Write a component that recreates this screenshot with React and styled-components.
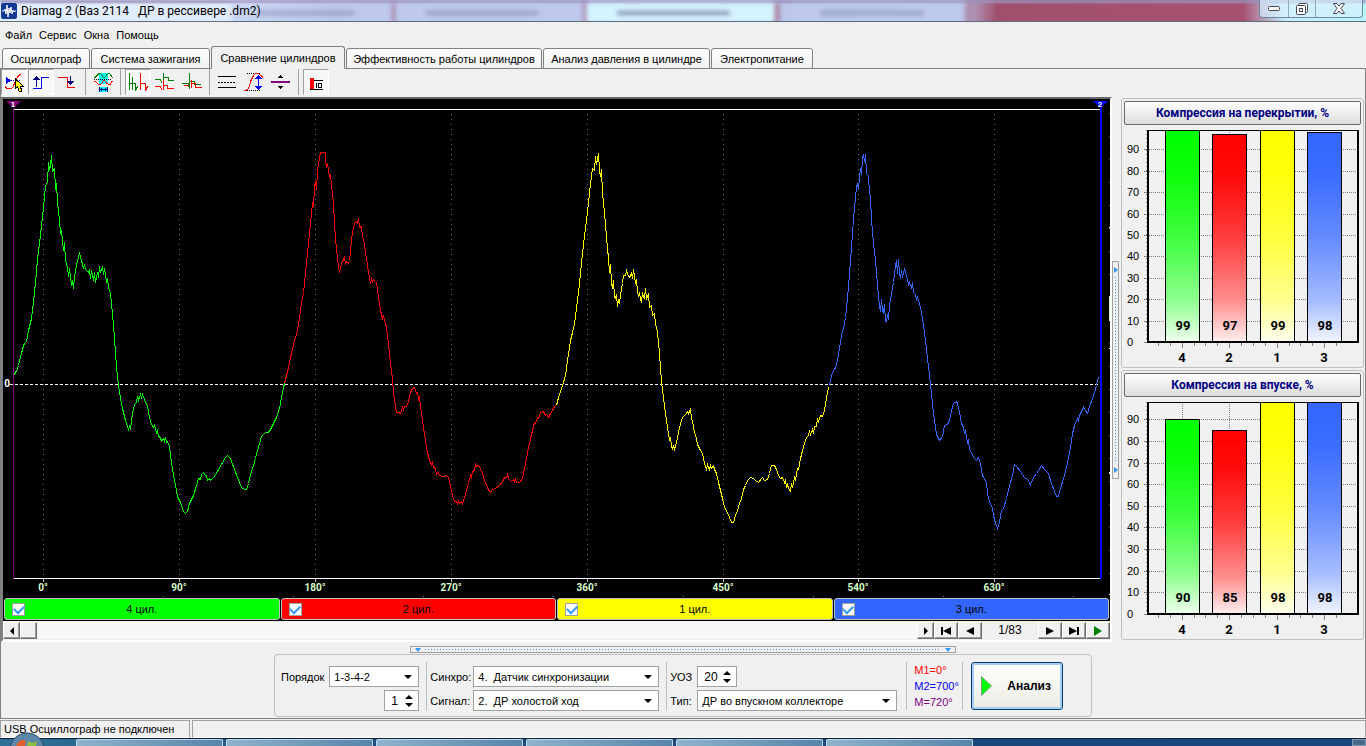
import React, { useState } from 'react';
import styled, { createGlobalStyle } from 'styled-components';

const GREEN = '#00ff00';
const RED = '#ff0000';
const YELLOW = '#ffff00';
const BLUE = '#3366ff';

const tabs = [
    { title: 'Осциллограф', width: 88 },
    { title: 'Система зажигания', width: 119 },
    { title: 'Сравнение цилиндров', width: 134 },
    { title: 'Эффективность работы цилиндров', width: 196 },
    { title: 'Анализ давления в цилиндре', width: 167 },
    { title: 'Электропитание', width: 102 },
];

const cylinders = [
    { name: '4 цил.', color: GREEN },
    { name: '2 цил.', color: RED },
    { name: '1 цил.', color: YELLOW },
    { name: '3 цил.', color: BLUE },
];

// Осциллограммы по цилиндрам
const waves = [
    {
        color: GREEN,
        points: '14,375 15,371 16,371 18,365 21,353 23,345 24,343 26,341 28,330 31,318 33,302 35,282 37,259 39,243 41,225 43,207 45,185 47,182 48,162 49,169 50,165 51,155 52,171 54,168 55,189 56,183 57,202 59,220 60,233 61,230 63,250 64,242 65,260 67,267 68,276 69,268 71,285 72,280 73,288 74,276 76,265 77,260 79,253 81,260 83,268 84,264 85,269 88,272 89,270 90,278 91,270 93,280 94,272 95,282 97,272 98,277 99,266 100,272 102,266 103,274 104,268 106,282 107,278 108,287 110,293 112,313 114,338 116,367 118,385 120,398 122,408 125,420 128,429 129,426 130,428 132,413 134,404 136,402 137,396 138,400 140,394 141,397 142,394 144,399 147,406 149,417 151,424 153,427 154,425 156,432 157,430 158,436 160,437 161,441 163,438 164,441 165,437 166,442 167,441 169,446 171,462 173,475 175,485 177,496 180,502 183,511 185,513 187,511 189,503 193,495 196,485 198,478 200,479 201,474 203,472 205,475 206,475 207,480 209,478 210,480 213,477 217,471 221,464 225,457 227,455 230,458 234,469 239,482 241,487 244,489 246,489 248,483 251,471 253,465 255,458 257,450 259,443 261,436 263,434 265,432 267,432 269,431 272,425 276,417 279,408 281,397 283,387 284,383',
    },
    {
        color: RED,
        points: '284,383 288,367 292,348 297,330 299,317 301,302 303,292 305,273 307,253 309,233 311,213 312,202 313,206 314,187 315,181 316,189 317,170 319,157 320,152 325,152 325,160 326,167 327,163 329,177 330,174 331,185 333,203 334,223 335,238 337,258 338,267 339,272 341,263 343,259 344,257 345,263 346,261 348,263 349,260 350,252 351,238 353,227 355,221 356,222 357,223 358,218 359,227 361,226 362,237 363,238 365,252 367,265 369,277 370,283 371,278 372,281 373,279 376,282 378,297 380,310 382,318 383,316 385,323 386,327 388,343 390,363 392,378 393,393 395,406 396,412 398,412 400,413 402,407 403,409 404,406 406,406 408,401 410,392 412,388 414,387 416,393 417,392 418,399 419,397 421,413 423,427 425,440 427,452 429,460 431,464 432,462 433,467 435,468 436,474 438,472 439,475 442,476 444,476 446,475 448,477 450,486 452,495 454,501 456,501 457,503 458,501 459,503 461,501 462,503 464,497 466,490 468,483 470,475 471,477 472,471 474,470 475,464 476,466 478,465 480,468 482,473 484,480 487,487 489,491 490,492 492,489 495,488 499,485 502,481 504,477 506,477 507,474 508,478 511,481 513,479 514,481 515,479 516,482 519,482 522,478 524,468 526,458 528,447 530,438 532,430 534,422 535,423 537,417 538,418 540,412 543,411 545,415 546,414 548,417 550,413 552,410 554,406 556,404',
    },
    {
        color: YELLOW,
        points: '556,405 558,397 562,385 565,375 567,360 569,347 570,340 572,332 574,323 576,308 578,292 580,273 582,253 584,235 586,220 588,202 590,183 592,168 594,170 595,156 596,164 597,159 598,153 599,170 600,176 601,169 602,193 604,212 606,237 608,258 609,272 610,264 611,282 612,288 613,280 614,297 615,298 616,294 617,306 618,300 619,302 620,295 622,283 623,275 625,275 626,270 628,276 629,277 631,273 632,278 633,269 635,283 636,279 637,292 638,295 639,292 640,299 641,302 642,292 643,297 644,298 645,288 646,299 648,293 649,307 651,305 652,315 654,313 655,323 657,332 659,353 660,367 661,382 663,397 665,413 667,427 669,440 670,437 671,445 672,449 673,445 674,449 676,442 678,432 680,423 682,417 685,414 687,411 688,413 690,409 691,417 693,425 694,433 695,434 697,444 700,450 702,453 704,463 706,469 707,464 708,467 709,469 710,465 711,468 713,465 714,469 716,473 718,482 720,490 722,498 724,507 727,512 729,517 731,522 733,522 735,515 737,510 739,503 741,498 743,489 745,485 747,480 750,477 753,478 755,480 758,482 761,478 762,477 764,480 767,479 769,473 771,465 774,465 776,469 778,475 780,478 782,477 784,482 785,479 786,487 787,484 788,488 790,491 791,483 792,487 794,477 795,479 797,468 798,469 800,458 802,450 804,443 806,437 808,435 809,431 810,434 812,429 813,433 814,426 816,426 817,418 818,421 820,415 822,416 824,410 826,397 828,387',
    },
    {
        color: BLUE,
        points: '829,385 831,375 834,368 835,368 837,360 839,347 842,330 843,329 845,317 847,298 849,273 851,247 853,218 855,197 856,187 857,183 858,189 859,177 860,168 861,174 862,157 863,154 864,161 865,154 866,173 868,175 869,193 870,196 871,220 873,243 875,260 877,285 879,305 880,311 881,299 882,310 883,312 884,304 885,321 886,321 887,314 888,319 889,305 890,299 892,288 893,282 895,265 896,260 897,273 898,259 899,273 900,278 901,270 902,277 904,268 906,275 908,284 909,282 911,287 912,282 913,292 915,294 916,299 917,297 919,303 921,312 923,325 925,340 927,358 929,375 931,393 933,413 935,427 936,434 939,440 942,436 944,425 947,424 949,420 951,410 953,403 956,401 957,403 959,412 961,423 963,427 964,433 965,429 966,437 967,442 968,440 969,448 972,455 974,458 976,460 978,457 980,463 982,475 986,482 987,493 989,502 992,507 993,515 995,523 997,528 999,522 1001,510 1003,508 1006,498 1009,485 1012,475 1014,464 1016,466 1020,471 1024,477 1027,479 1030,484 1033,477 1036,473 1038,470 1041,465 1044,469 1048,473 1051,483 1054,491 1056,496 1058,496 1060,488 1063,478 1066,467 1068,457 1070,447 1072,433 1074,425 1077,418 1078,420 1079,415 1081,411 1083,407 1084,409 1087,413 1089,406 1092,398 1094,392 1096,385 1098,377',
    },
];

const degrees = [
    [43, '0°'], [179, '90°'], [315, '180°'], [451, '270°'],
    [587, '360°'], [723, '450°'], [858, '540°'], [994, '630°'],
];

const charts = [
    { title: 'Компрессия на перекрытии, %', max: 99, values: [99, 97, 99, 98] },
    { title: 'Компрессия на впуске, %', max: 98, values: [90, 85, 98, 98] },
];

const bars = [
    { x: 43, label: '4', color: GREEN, tone: 'green' },
    { x: 90, label: '2', color: RED, tone: 'red' },
    { x: 138, label: '1', color: YELLOW, tone: 'yellow' },
    { x: 185, label: '3', color: BLUE, tone: 'blue' },
];

// Кнопки панели инструментов, разбитые на группы
const toolGroups = [
    [
        {
            name: 'Маркер', pressed: true,
            icon: (
                <>
                    <path d="M2 5v7l5-3.5z" fill="#0000ff" />
                    <path d="M7 8.500h10" stroke="#0000ff" strokeDasharray="1 1" />
                    <path d="M1 14.500c2 3 6 3.500 8 .5 2-4 3-11 8-13" stroke={RED} />
                    <path d="M11 6.500v10l2.500-1.500 2 5 2.500-1-2-5h3z" fill={YELLOW} stroke="#000" />
                </>
            ),
        },
        {
            name: 'Передний фронт', pressed: true,
            icon: (
                <>
                    <path d="M2 16.500h8v-11h8" stroke="#0000ff" />
                    <path d="M5.500 15V7" stroke="#000080" />
                    <path d="M5.500 4l3.500 4h-7z" fill="#000080" />
                </>
            ),
        },
        {
            name: 'Задний фронт',
            icon: (
                <>
                    <path d="M0 5.500h9v10h8" stroke={RED} />
                    <path d="M12.500 4v6" stroke="#000080" />
                    <path d="M12.500 13l3.500-4h-7z" fill="#000080" />
                </>
            ),
        },
    ],
    [
        {
            name: 'Окно',
            icon: (
                <>
                    <path d="M6 1h9v11h-9zM6 15h9v5h-9z" fill="#00ffff" />
                    <path d="M1 5.500c3 0 3-4 6-4s2 4 4 4 2-4 5-4 1 4 4 4" stroke="#008000" />
                    <path d="M1 9.500c3 0 3 3 6 3s2-4 4-4 2 4 5 4 1-3 4-3" stroke={RED} />
                    <path d="M1 7.500h18" stroke="#000" strokeDasharray="1 1" />
                    <path d="M6.500 15v5M14.500 15v5M7 17.500h7M8.500 16v3M12.500 16v3" stroke="#000080" />
                </>
            ),
        },
    ],
    [
        {
            name: 'Наложение', pressed: true,
            icon: (
                <>
                    <path d="M1.500 18V1M1.500 11.500h6v7l2-4M4.500 5v13" stroke="#008000" />
                    <path d="M12.500 1v17M12.500 11.500h5v7l2-4" stroke={RED} />
                </>
            ),
        },
        {
            name: 'Раздельно',
            icon: (
                <>
                    <path d="M0 7.500h5l2 3M8.500 1v9M9 5.500h4v3h6" stroke="#008000" />
                    <path d="M0 14.500h5l2 3M8.500 8v10M9 13.500h3v3h7" stroke={RED} />
                </>
            ),
        },
        {
            name: 'Совмещение',
            icon: (
                <>
                    <path d="M0 11.500h6v3M7.500 1v16M8 9.500h4v3h7" stroke="#008000" />
                    <path d="M2 13.500h5M9.500 8v8M10 11.500h3v4h7" stroke={RED} />
                </>
            ),
        },
    ],
    [
        {
            name: 'Линии',
            icon: (
                <>
                    <path d="M1 4.500h18M1 15.500h18" stroke="#000" />
                    <path d="M1 10.500h18" stroke="#000" strokeDasharray="2 1" />
                </>
            ),
        },
        {
            name: 'Масштаб',
            icon: (
                <>
                    <path d="M3 1.500h14M3 18.500h14" stroke="#000" strokeDasharray="1 1" />
                    <path d="M0 18.500c6 0 5-5 7-10s5-10 10-5l2 2" stroke={RED} />
                    <path d="M14.500 5v11" stroke="#0000ff" />
                    <path d="M14.500 2.500l4 4.500h-8zM14.500 18.500l4-4.500h-8z" fill="#0000ff" />
                </>
            ),
        },
        {
            name: 'Сдвиг',
            icon: (
                <>
                    <path d="M0 9h19v2h-19z" fill="#800080" />
                    <path d="M9.500 2.500l3 3.500h-6zM9.500 17.500l3-3.500h-6z" fill="#000" />
                </>
            ),
        },
    ],
    [
        {
            name: 'Гистограмма', pressed: true,
            icon: (
                <>
                    <path d="M4 6h4v11h-4z" fill={RED} />
                    <path d="M4 17.500h13M8 8.500h9M10.500 11v5M12.500 11.500h3v4h-3z" stroke="#000" />
                </>
            ),
        },
    ],
];

function WaveChart() {
    return (
        <WaveSvg viewBox="3 99 1107 499" role="img" aria-label="Осциллограмма давления">
            <g shapeRendering="crispEdges">
                {degrees.map(([x]) => (
                    <g key={x}>
                        <path d={`M${x + 0.5} 114V578`} stroke="#606060" strokeDasharray="1 4" />
                        <path d={`M${x + 0.5} 579v3`} stroke="#c0c0c0" />
                    </g>
                ))}
                <path d="M14 109.500H1100M14 578.500H1100" stroke="#fff" />
                <path d="M10 384.500H1100" stroke="#fff" strokeDasharray="3 2" />
                <path d="M13.500 106V579" stroke="#800080" />
                <path d="M1109.500 113V590" stroke="#505050" strokeDasharray="1 22" />
                <path d="M1109.500 296v25" stroke="#d0f0d0" />
                <path d="M1109.500 227v1M1109.500 348v1M1109.500 472v2M1109.500 594v1" stroke="#fff" />
                <path d="M163 596.500H1090" stroke="#808080" strokeDasharray="1 129" />
                <g transform="translate(0.500 0.500)">
                    {waves.map((wave) => (
                        <polyline key={wave.color} points={wave.points} fill="none" stroke={wave.color} />
                    ))}
                </g>
                <rect x="1100" y="106" width="2" height="473" fill="#0000ff" />
            </g>
            <path d="M6 101h15l-7.500 7z" fill="#800080" />
            <path d="M1093 101h15l-7.500 7z" fill="#0000ff" />
            <MarkerText x="13" y="107">1</MarkerText>
            <MarkerText x="1100" y="107">2</MarkerText>
            <AxisText x="7" y="387">0</AxisText>
            {degrees.map(([x, text]) => (
                <AxisText key={x} x={x} y="591" $tint>{text}</AxisText>
            ))}
        </WaveSvg>
    );
}

function CompressionChart({ title, max, values }) {
    const scale = 212 / max;
    const level = (value) => Math.round(216 - value * scale);

    return (
        <ChartGroup>
            <ChartTitle type="button">{title}</ChartTitle>
            <BarSvg viewBox="0 -1 239 242" role="img" aria-label={title}>
                <defs>
                    {bars.map((bar) => (
                        <linearGradient key={bar.tone} id={`fill-${bar.tone}`} x1="0" y1="0" x2="0" y2="1">
                            <stop offset="0" stopColor={bar.color} />
                            <stop offset="0.2" stopColor={bar.color} stopOpacity="0.96" />
                            <stop offset="0.5" stopColor={bar.color} stopOpacity="0.76" />
                            <stop offset="0.8" stopColor={bar.color} stopOpacity="0.44" />
                            <stop offset="1" stopColor={bar.color} stopOpacity="0.06" />
                        </linearGradient>
                    ))}
                </defs>
                <g shapeRendering="crispEdges">
                    {[0, 10, 20, 30, 40, 50, 60, 70, 80, 90].map((v) => (
                        <g key={v}>
                            <path d={`M26 ${level(v) + 0.5}H234`} stroke="#808080" strokeDasharray="1 1" />
                            <path d={`M21 ${level(v) + 0.5}h4`} stroke="#808080" />
                        </g>
                    ))}
                    <path d="M23.500 4V216" stroke="#808080" strokeDasharray="1 3" />
                    {bars.map((bar, i) => (
                        <g key={bar.label}>
                            <path d={`M${bar.x + 16.5} 4V216`} stroke="#808080" strokeDasharray="1 1" />
                            <path d={`M${bar.x + 16.5} 217v5M${bar.x + 4.5} 217v3M${bar.x + 28.5} 217v3M${bar.x - 7.5} 217v3`} stroke="#808080" />
                            <rect x={bar.x - 1} y={level(values[i])} width="35" height={216 - level(values[i])} fill="#fff" />
                            <rect x={bar.x - 0.5} y={level(values[i]) + 0.5} width="34" height={216 - level(values[i])} fill={`url(#fill-${bar.tone})`} stroke="#000" />
                        </g>
                    ))}
                    <path d="M24 4.500H236" stroke="#000" />
                    <path d="M25 4V216H235V4" stroke="#000" strokeWidth="2" fill="none" />
                </g>
                {[0, 10, 20, 30, 40, 50, 60, 70, 80, 90].map((v) => (
                    <ScaleText key={v} x="4" y={level(v) + 4}>{v}</ScaleText>
                ))}
                {bars.map((bar, i) => (
                    <g key={bar.label}>
                        <BarText x={bar.x + 17} y="204">{values[i]}</BarText>
                        <BarText x={bar.x + 16} y="236">{bar.label}</BarText>
                    </g>
                ))}
            </BarSvg>
        </ChartGroup>
    );
}

function ComboBox({ id, width, value }) {
    return (
        <Combo $width={width}>
            <ComboSelect id={id} defaultValue={value}>
                <option value={value}>{value}</option>
            </ComboSelect>
            <ComboArrow viewBox="0 0 8 4" aria-hidden="true"><path d="M0 0h8l-4 4z" /></ComboArrow>
        </Combo>
    );
}

function SpinBox({ id, label, width, value }) {
    const [number, setNumber] = useState(value);

    return (
        <Spin $width={width}>
            <SpinInput
                type="number"
                id={id}
                aria-label={label}
                value={number}
                onChange={(event) => setNumber(Number(event.target.value))}
            />
            <SpinButtons>
                <SpinButton type="button" aria-label="Больше" onClick={() => setNumber(number + 1)}>
                    <svg width="8" height="4" viewBox="0 0 8 4"><path d="M0 4h8l-4-4z" /></svg>
                </SpinButton>
                <SpinButton type="button" aria-label="Меньше" onClick={() => setNumber(number - 1)}>
                    <svg width="8" height="4" viewBox="0 0 8 4"><path d="M0 0h8l-4 4z" /></svg>
                </SpinButton>
            </SpinButtons>
        </Spin>
    );
}

function App() {
    const [checked, setChecked] = useState([true, true, true, true]);

    const toggle = (index) => {
        setChecked(checked.map((value, i) => (i === index ? !value : value)));
    };

    return (
        <Window>
            <GlobalStyle />
            <TitleBar>
                <Backdrop aria-hidden="true">
                    <GlassTab $left={17} $width={12} />
                    <GlassTab $left={29} $width={14} />
                    <GlassTab $left={43} $width={14} $active />
                    <GlassTab $left={58} $width={13} />
                </Backdrop>
                <AppIcon viewBox="0 0 16 16" aria-hidden="true">
                    <rect width="16" height="16" rx="2" fill="#123a94" />
                    <path d="M1 8h2l1-2 1 5 1-9 1 12 1-9 1 5 1-6 1 7 1-4 1 2 1-1h1" fill="none" stroke="#fff" />
                </AppIcon>
                <Caption>Diamag 2 (Ваз 2114{'   '}ДР в рессивере .dm2)</Caption>
                <CaptionButtons>
                    <CaptionButton type="button" aria-label="Свернуть" $width={28}>
                        <svg width="12" height="6" viewBox="0 0 12 6"><rect x="0.500" y="0.500" width="11" height="4" rx="1" fill="#fff" stroke="#445" /></svg>
                    </CaptionButton>
                    <CaptionButton type="button" aria-label="Развернуть" $width={27}>
                        <svg width="12" height="12" viewBox="0 0 12 12" fill="#fff" stroke="#445">
                            <rect x="2.500" y="0.500" width="9" height="9" rx="1" />
                            <rect x="0.500" y="2.500" width="9" height="9" rx="1" />
                            <rect x="3.500" y="5.500" width="3" height="3" />
                        </svg>
                    </CaptionButton>
                    <CaptionButton type="button" aria-label="Закрыть" $width={47}>
                        <svg width="12" height="11" viewBox="0 0 12 11"><path d="M.5.500h3.500l2 2.500 2-2.500h3.500l-3.500 5 3.500 5h-3.500l-2-2.500-2 2.500h-3.500l3.500-5z" fill="#fff" stroke="#445" /></svg>
                    </CaptionButton>
                </CaptionButtons>
            </TitleBar>

            <MenuBar>
                {['Файл', 'Сервис', 'Окна', 'Помощь'].map((item) => (
                    <MenuItem key={item} type="button">{item}</MenuItem>
                ))}
            </MenuBar>

            <TabRow role="tablist">
                {tabs.map((tab, i) => (
                    <Tab key={tab.title} type="button" role="tab" aria-selected={i === 2} $active={i === 2} $width={tab.width}>
                        {tab.title}
                    </Tab>
                ))}
            </TabRow>

            <Page>
                <ToolBar>
                    {toolGroups.map((group, i) => (
                        <ToolGroup key={i}>
                            {group.map((tool) => (
                                <ToolButton key={tool.name} type="button" aria-label={tool.name} $pressed={tool.pressed}>
                                    <ToolIcon viewBox="0 0 20 20">{tool.icon}</ToolIcon>
                                </ToolButton>
                            ))}
                        </ToolGroup>
                    ))}
                </ToolBar>

                <Workspace>
                    <Scope>
                        <WaveArea><WaveChart /></WaveArea>
                        <CylinderRow>
                            {cylinders.map((cylinder, i) => (
                                <Cylinder key={cylinder.name} $color={cylinder.color}>
                                    <CheckBox type="checkbox" checked={checked[i]} onChange={() => toggle(i)} />
                                    <CylinderName>{cylinder.name}</CylinderName>
                                </Cylinder>
                            ))}
                        </CylinderRow>
                        <ScrollRow>
                            <BevelButton type="button" aria-label="Влево" $width={17}><Glyph viewBox="0 0 16 10"><path d="M10 1v8l-4-4z" /></Glyph></BevelButton>
                            <BevelButton type="button" aria-label="Ползунок" $width={17} />
                            <ScrollTrack />
                            <BevelButton type="button" aria-label="Вправо" $width={17}><Glyph viewBox="0 0 16 10"><path d="M6 1v8l4-4z" /></Glyph></BevelButton>
                            <BevelButton type="button" aria-label="В начало" $width={24}><Glyph viewBox="0 0 16 10"><path d="M3 1h2v8h-2zM13 1v8l-8-4z" /></Glyph></BevelButton>
                            <BevelButton type="button" aria-label="Назад" $width={24}><Glyph viewBox="0 0 16 10"><path d="M12 1v8l-8-4z" /></Glyph></BevelButton>
                            <FrameNumber>1/83</FrameNumber>
                            <BevelButton type="button" aria-label="Вперёд" $width={24}><Glyph viewBox="0 0 16 10"><path d="M4 1v8l8-4z" /></Glyph></BevelButton>
                            <BevelButton type="button" aria-label="В конец" $width={24}><Glyph viewBox="0 0 16 10"><path d="M3 1v8l8-4zM11 1h2v8h-2z" /></Glyph></BevelButton>
                            <BevelButton type="button" aria-label="Пуск" $width={24}><Glyph viewBox="0 0 16 10"><path d="M4 0v10l8-5z" fill="#008000" /></Glyph></BevelButton>
                        </ScrollRow>
                    </Scope>
                    <SideSplitter>
                        <svg width="4" height="6" viewBox="0 0 4 6"><path d="M0 0v6l4-3z" fill="#3399ff" /></svg>
                        <Dots $vertical />
                        <svg width="4" height="6" viewBox="0 0 4 6"><path d="M0 0v6l4-3z" fill="#3399ff" /></svg>
                    </SideSplitter>
                    <SidePanel>
                        {charts.map((chart) => (
                            <CompressionChart key={chart.title} {...chart} />
                        ))}
                    </SidePanel>
                </Workspace>

                <BottomSplitter>
                    <svg width="6" height="4" viewBox="0 0 6 4"><path d="M0 0h6l-3 4z" fill="#3399ff" /></svg>
                    <Dots />
                    <svg width="6" height="4" viewBox="0 0 6 4"><path d="M0 0h6l-3 4z" fill="#3399ff" /></svg>
                </BottomSplitter>

                <Settings>
                    <OrderGroup>
                        <OrderRow>
                            <FieldLabel htmlFor="order">Порядок</FieldLabel>
                            <ComboBox id="order" width={90} value="1-3-4-2" />
                        </OrderRow>
                        <SpinBox id="first" label="Цилиндр" width={35} value={1} />
                    </OrderGroup>
                    <Fields $labelWidth={43}>
                        <FieldLabel htmlFor="sync">Синхро:</FieldLabel>
                        <ComboBox id="sync" width={186} value={'4.\u00a0 Датчик синхронизации'} />
                        <FieldLabel htmlFor="signal">Сигнал:</FieldLabel>
                        <ComboBox id="signal" width={186} value={'2.\u00a0 ДР холостой ход'} />
                    </Fields>
                    <Fields $labelWidth={27}>
                        <FieldLabel htmlFor="angle">УОЗ</FieldLabel>
                        <SpinBox id="angle" label="УОЗ" width={40} value={20} />
                        <FieldLabel htmlFor="kind">Тип:</FieldLabel>
                        <ComboBox id="kind" width={200} value="ДР во впускном коллекторе" />
                    </Fields>
                    <Markers>
                        <MarkerValue $color="#ff0000">M1=0°</MarkerValue>
                        <MarkerValue $color="#0000ff">M2=700°</MarkerValue>
                        <MarkerValue $color="#800080">M=720°</MarkerValue>
                    </Markers>
                    <AnalyzeButton type="button">
                        <svg width="11" height="20" viewBox="0 0 11 20"><path d="M0.500 0.500v19l10-9.500z" fill="#00ff00" stroke="#80a080" /></svg>
                        Анализ
                    </AnalyzeButton>
                </Settings>
            </Page>

            <StatusBar>
                <StatusCell $width={190}>USB Осциллограф не подключен</StatusCell>
                <StatusCell />
            </StatusBar>

            <TaskBar>
                <StartOrb viewBox="0 0 36 14" aria-hidden="true">
                    <circle cx="18" cy="18" r="17" fill="#5d87a8" stroke="#2c4a68" />
                    <path d="M8 12c2-4 6-5 9-3l-1 5h-9z" fill="#e06030" />
                    <path d="M19 9c3 2 6 2 9 0l-1 5h-9z" fill="#8cc040" />
                </StartOrb>
                <TaskItem /><TaskItem /><TaskItem /><TaskItem /><TaskItem /><TaskItem />
                <ShowDesktop />
            </TaskBar>
        </Window>
    );
}

// Стили

const GlobalStyle = createGlobalStyle`
  * {
    box-sizing: border-box;
  }

  body {
    margin: 0;
    background: #f0f0f0;
    color: #000;
    font-family: "Liberation Sans", Arial, sans-serif;
    font-size: 11px;
  }

  button, input, select {
    margin: 0;
    padding: 0;
    color: inherit;
    font-family: inherit;
    font-size: inherit;
  }

  svg {
    display: block;
    flex-shrink: 0;
  }
`;

const Window = styled.div`
  display: flex;
  flex-direction: column;
  height: 100vh;
  min-height: 640px;
  overflow: hidden;
`;

const TitleBar = styled.header`
  display: flex;
  align-items: center;
  position: relative;
  height: 22px;
  padding-left: 1px;
  overflow: hidden;
  border-bottom: 1px solid #5f6c80;
  background: linear-gradient(90deg, #e3effb 0, #dfeafa 18%, #bcc6e8 24%, #bcc8ec 70%, #a0506c 73%, #a85070 91%, #c4ecf8 94%, #b8f6fc 100%);
`;

const Backdrop = styled.div`
  position: absolute;
  inset: 0;
  border-top: 3px solid #9a90bc;
  filter: blur(1px);
`;

const GlassTab = styled.div`
  position: absolute;
  top: 0;
  left: ${(props) => props.$left}%;
  width: ${(props) => props.$width}%;
  height: 20px;
  border-right: 4px solid #a06888;
  background:
    linear-gradient(#7f8bb0, #7f8bb0) 40% 8px / 60% 4px no-repeat,
    ${(props) => (props.$active ? '#d6f4ff' : '#bfcaee')};
  opacity: ${(props) => (props.$active ? 1 : 0.7)};
  filter: blur(2px);
`;

const AppIcon = styled.svg`
  position: relative;
  width: 16px;
  height: 16px;
`;

const Caption = styled.h1`
  position: relative;
  flex: 1;
  margin: 0 0 0 4px;
  font-family: Roboto, "Noto Sans", sans-serif;
  font-size: 12px;
  font-weight: 400;
  line-height: 20px;
  white-space: pre;
`;

const CaptionButtons = styled.div`
  display: flex;
  position: relative;
  align-self: flex-start;
  height: 18px;
  margin-right: 3px;
  border: 1px solid #7088a0;
  border-top: 0;
  border-radius: 0 0 4px 4px;
  background: rgba(215, 240, 255, 0.7);
`;

const CaptionButton = styled.button`
  display: flex;
  align-items: center;
  justify-content: center;
  width: ${(props) => props.$width}px;
  border: 0;
  background: none;

  & + & {
    border-left: 1px solid #90a8bc;
  }
`;

const MenuBar = styled.nav`
  display: flex;
  align-items: center;
  gap: 7px;
  height: 24px;
  padding: 2px 0 0 5px;
`;

const MenuItem = styled.button`
  border: 0;
  background: none;
  line-height: 20px;
`;

const TabRow = styled.div`
  display: flex;
  align-items: flex-end;
  gap: 1px;
  height: 23px;
  padding-left: 2px;
  box-shadow: inset 0 -1px #808080;
`;

const Tab = styled.button`
  width: ${(props) => props.$width}px;
  height: ${(props) => (props.$active ? 23 : 21)}px;
  border: 1px solid #808080;
  border-bottom-color: ${(props) => (props.$active ? '#f0f0f0' : '#808080')};
  border-radius: 3px 3px 0 0;
  background: ${(props) => (props.$active ? '#f0f0f0' : 'linear-gradient(#fff, #f0f0f0)')};
  white-space: nowrap;
`;

const Page = styled.main`
  display: flex;
  flex: 1;
  flex-direction: column;
  min-height: 0;
  border: 1px solid #808080;
  border-top: 0;
`;

const ToolBar = styled.div`
  display: flex;
  align-items: flex-start;
  height: 28px;
`;

const ToolGroup = styled.div`
  display: flex;
  gap: 1px;

  & + & {
    margin-left: 4px;
    padding-left: 4px;
    border-left: 1px solid #a0a0a0;
  }
`;

const ToolButton = styled.button`
  display: flex;
  align-items: center;
  justify-content: center;
  width: 26px;
  height: 26px;
  border: 1px solid;
  border-color: ${(props) => (props.$pressed ? '#a0a0a0 #fff #fff #a0a0a0' : 'transparent')};
  background: ${(props) => (props.$pressed ? '#f8f8f8' : 'none')};
`;

const ToolIcon = styled.svg`
  width: 20px;
  height: 20px;
  fill: none;
  shape-rendering: crispEdges;
`;

const Workspace = styled.div`
  display: flex;
  flex: 1;
  min-height: 0;
  padding-right: 1px;
`;

const Scope = styled.section`
  display: flex;
  flex: 1;
  flex-direction: column;
  min-width: 0;
  border: 2px solid;
  border-color: #696969 #fff #fff #808080;
`;

const WaveArea = styled.div`
  flex: 1;
  min-height: 0;
  background: #000;
`;

const WaveSvg = styled.svg`
  width: 100%;
  height: 100%;
`;

const MarkerText = styled.text`
  fill: #fff;
  font-size: 8px;
  font-weight: 700;
  text-anchor: middle;
`;

const AxisText = styled.text`
  fill: ${(props) => (props.$tint ? '#d8ffc8' : '#fff')};
  font-family: Roboto, "Liberation Sans", sans-serif;
  font-size: 10px;
  font-weight: 700;
  text-anchor: middle;
`;

const CylinderRow = styled.div`
  display: flex;
  gap: 1px;
  height: 23px;
  padding: 0 1px 1px;
  background: #000;
`;

const Cylinder = styled.label`
  display: flex;
  flex: 1;
  align-items: center;
  padding: 0 7px;
  border: 1px solid #c0c0c0;
  border-radius: 3px;
  background: ${(props) => props.$color};
`;

const CheckBox = styled.input`
  display: grid;
  place-content: center;
  width: 13px;
  height: 13px;
  appearance: none;
  border: 1px solid #a0a0a0;
  background: #fff;

  &:checked::before {
    content: "";
    width: 8px;
    height: 5px;
    margin-bottom: 2px;
    border: solid #3399ff;
    border-width: 0 0 2px 2px;
    transform: rotate(-45deg);
  }
`;

const CylinderName = styled.span`
  flex: 1;
  padding-right: 13px;
  text-align: center;
`;

const ScrollRow = styled.div`
  display: flex;
  height: 19px;
  padding: 1px 0;
`;

const BevelButton = styled.button`
  display: flex;
  align-items: center;
  justify-content: center;
  width: ${(props) => props.$width}px;
  border: 1px solid;
  border-color: #fff #696969 #696969 #fff;
  background: #f0f0f0;
  box-shadow: inset -1px -1px #a0a0a0;
`;

const Glyph = styled.svg`
  width: 16px;
  height: 10px;
`;

const ScrollTrack = styled.div`
  flex: 1;
  background: #f8f8f8;
`;

const FrameNumber = styled.output`
  width: 56px;
  font-size: 12px;
  line-height: 17px;
  text-align: center;
`;

const SideSplitter = styled.div`
  display: flex;
  flex-direction: column;
  align-items: center;
  align-self: center;
  justify-content: space-between;
  width: 7px;
  height: 40%;
  padding: 5px 0;
  border: 1px solid #a0a0a0;
`;

const Dots = styled.div`
  flex: 1;
  margin: ${(props) => (props.$vertical ? '4px 0' : '0 4px')};
  ${(props) => (props.$vertical ? 'width' : 'height')}: 1px;
  background: repeating-linear-gradient(${(props) => (props.$vertical ? '180deg' : '90deg')}, #3399ff 0 1px, transparent 1px 3px);
`;

const SidePanel = styled.aside`
  display: flex;
  flex-direction: column;
  gap: 2px;
  width: 243px;
  margin-left: 2px;
  padding-top: 1px;
`;

const ChartGroup = styled.section`
  padding: 2px 1px 0;
  border: 1px solid #c0c0c0;
  border-radius: 3px;
`;

const ChartTitle = styled.button`
  display: block;
  width: 237px;
  height: 24px;
  margin: 0 auto;
  border: 1px solid #696969;
  border-radius: 2px;
  background: linear-gradient(#fff, #dcdcdc);
  color: #000080;
  font-family: Roboto, "Liberation Sans", sans-serif;
  font-size: 12px;
  font-weight: 700;
`;

const BarSvg = styled.svg`
  width: 100%;
`;

const ScaleText = styled.text`
  font-size: 11px;
`;

const BarText = styled.text`
  font-family: Roboto, "Liberation Sans", sans-serif;
  font-size: 13px;
  font-weight: 700;
  text-anchor: middle;
`;

const BottomSplitter = styled.div`
  display: flex;
  align-items: center;
  align-self: center;
  width: 40%;
  height: 7px;
  margin-top: 4px;
  padding: 0 4px;
  border: 1px solid #a0a0a0;
`;

const Settings = styled.section`
  display: flex;
  align-items: flex-start;
  align-self: center;
  width: 818px;
  height: 63px;
  margin: 1px 0;
  padding: 7px 6px 0;
  border: 1px solid #c0c0c0;
  border-radius: 4px;
`;

const OrderGroup = styled.div`
  display: flex;
  flex-direction: column;
  gap: 3px;
  align-items: flex-end;
  padding-top: 4px;
`;

const OrderRow = styled.div`
  display: flex;
  gap: 5px;
  align-items: center;
`;

const Fields = styled.div`
  display: grid;
  grid-template-columns: ${(props) => props.$labelWidth}px auto;
  row-gap: 3px;
  align-items: center;
  margin-left: 7px;
  padding: 4px 0 0 3px;
  border-left: 1px solid #c0c0c0;
`;

const FieldLabel = styled.label`
  white-space: nowrap;
`;

const Combo = styled.div`
  display: grid;
  align-items: center;
  width: ${(props) => props.$width}px;
  height: 21px;
  border: 1px solid #a0a0a0;
  background: #fff;
`;

const ComboSelect = styled.select`
  grid-area: 1 / 1;
  height: 19px;
  padding-left: 4px;
  appearance: none;
  border: 0;
  background: none;
`;

const ComboArrow = styled.svg`
  grid-area: 1 / 1;
  justify-self: end;
  width: 8px;
  height: 4px;
  margin-right: 6px;
  pointer-events: none;
`;

const Spin = styled.div`
  display: flex;
  align-items: center;
  width: ${(props) => props.$width}px;
  height: 21px;
  padding-right: 5px;
  border: 1px solid #a0a0a0;
  background: #fff;
`;

const SpinInput = styled.input`
  flex: 1;
  min-width: 0;
  padding-left: 6px;
  appearance: textfield;
  border: 0;
  background: none;
  font-size: 12px;

  &::-webkit-inner-spin-button {
    display: none;
  }
`;

const SpinButtons = styled.div`
  display: flex;
  flex-direction: column;
  gap: 4px;
`;

const SpinButton = styled.button`
  border: 0;
  background: none;
`;

const Markers = styled.div`
  display: flex;
  flex-direction: column;
  width: 57px;
  margin-left: 9px;
  padding-left: 7px;
  border: solid #c0c0c0;
  border-width: 0 1px;
`;

const MarkerValue = styled.span`
  color: ${(props) => props.$color};
  line-height: 16px;
`;

const AnalyzeButton = styled.button`
  display: flex;
  gap: 15px;
  align-items: center;
  width: 92px;
  height: 48px;
  margin-left: 8px;
  padding-left: 9px;
  border: 1px solid #003c74;
  border-radius: 3px;
  background: linear-gradient(#fff, #ecebe4);
  box-shadow: inset 0 0 0 2px #a8ccf4;
  font-size: 12px;
  font-weight: 700;
`;

const StatusBar = styled.footer`
  display: flex;
  gap: 2px;
  height: 19px;
  padding-top: 1px;
`;

const StatusCell = styled.div`
  width: ${(props) => (props.$width ? `${props.$width}px` : 'auto')};
  flex: ${(props) => (props.$width ? 'none' : 1)};
  padding-left: 3px;
  border: 1px solid;
  border-color: #a0a0a0 #a0a0a0 #fff #a0a0a0;
  line-height: 17px;
`;

const TaskBar = styled.div`
  display: flex;
  gap: 3px;
  position: relative;
  height: 8px;
  padding-left: 76px;
  border-top: 1px solid #0c2038;
  background: linear-gradient(90deg, #2f7096, #1c4878 30%, #1a4680);
`;

const StartOrb = styled.svg`
  position: absolute;
  bottom: 0;
  left: 9px;
  width: 36px;
  height: 14px;
`;

const TaskItem = styled.div`
  width: 147px;
  border: 1px solid #c0dcec;
  border-bottom: 0;
  border-radius: 2px 2px 0 0;
  background: linear-gradient(90deg, #8cb4cc, #5884a8);
`;

const ShowDesktop = styled.div`
  width: 14px;
  margin-left: auto;
  border: 1px solid #809cb8;
  background: #48688c;
`;

export default App;
